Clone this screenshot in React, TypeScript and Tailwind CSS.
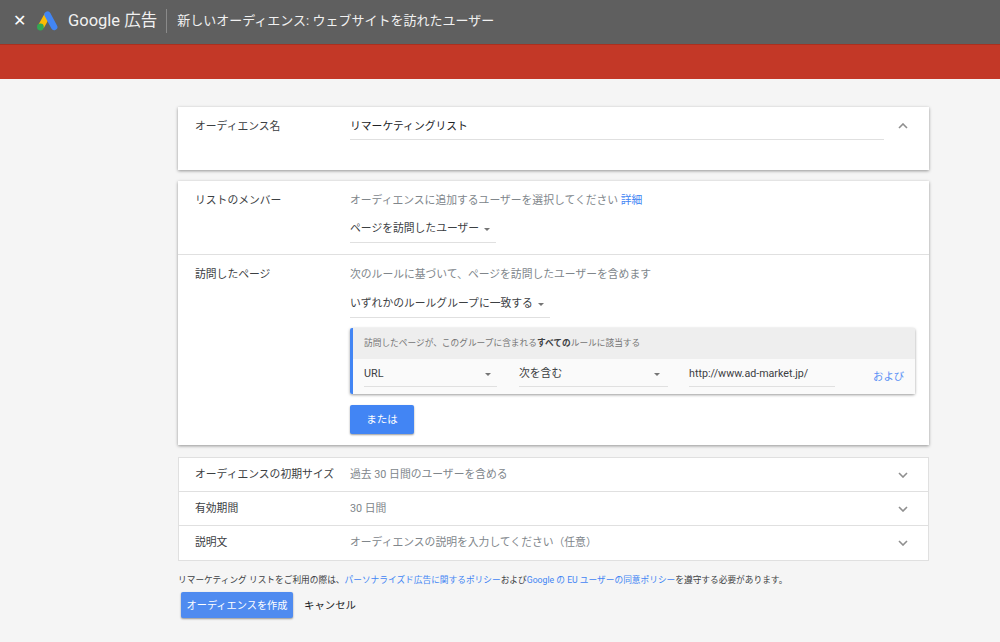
const font = "font-['Roboto','Noto_Sans_CJK_JP',sans-serif]"

function Caret() {
  return <span className="ml-[5px] inline-block h-0 w-0 border-x-[3.5px] border-t-[3.5px] border-x-transparent border-t-[#757575]" />
}

function Chevron({ up }: { up?: boolean }) {
  return (
    <svg width="10" height="6" viewBox="0 0 10 6" fill="none" stroke="#8f8f8f" strokeWidth="1.6" className={up ? "rotate-180" : ""}>
      <path d="M1 1l4 4 4-4" />
    </svg>
  )
}

function AdsLogo() {
  return (
    <svg width="22" height="20" viewBox="0 0 22 20" fill="none" strokeLinecap="round" strokeWidth="6.4">
      <path d="M11.5 4 5 15.5" stroke="#fbbc04" strokeLinecap="butt" />
      <path d="M11.5 3.6 18.2 16" stroke="#4285f4" />
      <circle cx="4.4" cy="16" r="3.4" fill="#34a853" />
    </svg>
  )
}

function SummaryRow({ label, value }: { label: string; value: string }) {
  return (
    <div className="flex h-[34px] items-center border-b border-[#e0e0e0] pl-[16px] pr-[20px] last:border-b-0">
      <div className="w-[155px] whitespace-nowrap text-[10.8px] text-[#3c4043]">{label}</div>
      <div className="flex-1 text-[10.8px] text-[#80868b]">{value}</div>
      <Chevron />
    </div>
  )
}

export default function App() {
  return (
    <div className={`${font} min-h-[642px] w-[1000px] bg-[#f5f5f5]`}>
      <header className="flex h-[44px] items-center bg-[#5f5f5f] pb-[2px] text-white">
        <span className="ml-[13px] text-[16px] leading-none">✕</span>
        <div className="ml-[10px]"><AdsLogo /></div>
        <div className="ml-[10px] text-[16.5px] text-[#f1f1f1]">Google 広告</div>
        <div className="ml-[9px] h-[24px] w-px bg-[#8a8a8a]" />
        <div className="ml-[10px] text-[13px] text-[#f1f1f1]">新しいオーディエンス: ウェブサイトを訪れたユーザー</div>
      </header>
      <div className="h-[35px] border-t border-[#a9301f] bg-[#c33827]" />

      <main className="ml-[178px] w-[751px] pt-[28px]">
        <section className="flex h-[63px] bg-white pl-[17px] pr-[20px] pt-[12px] shadow-[0_1px_3px_rgba(0,0,0,0.4)]">
          <div className="w-[155px] text-[10.8px] text-[#3c4043]">オーディエンス名</div>
          <div className="h-[21px] w-[534px] border-b border-[#e0e0e0] text-[10.8px] text-[#202124]">リマーケティングリスト</div>
          <div className="ml-[14px] mt-[4px]"><Chevron up /></div>
        </section>

        <section className="mt-[11px] bg-white shadow-[0_1px_3px_rgba(0,0,0,0.4)]">
          <div className="flex h-[74px] border-b border-[#e0e0e0] pl-[17px] pt-[12px]">
            <div className="w-[155px] text-[10.8px] text-[#3c4043]">リストのメンバー</div>
            <div>
              <div className="text-[10.8px] text-[#80868b]">オーディエンスに追加するユーザーを選択してください <span className="text-[#4285f4]">詳細</span></div>
              <div className="mt-[10px] flex h-[24px] w-[146px] items-center whitespace-nowrap border-b border-[#e0e0e0] pb-[3px] text-[10.8px] text-[#3c4043]">ページを訪問したユーザー<Caret /></div>
            </div>
          </div>
          <div className="flex pb-[11px] pl-[17px] pr-[14px] pt-[12px]">
            <div className="w-[155px] text-[10.8px] text-[#3c4043]">訪問したページ</div>
            <div className="flex-1">
              <div className="text-[10.8px] text-[#80868b]">次のルールに基づいて、ページを訪問したユーザーを含めます</div>
              <div className="mt-[11px] flex h-[24px] w-[200px] items-center whitespace-nowrap border-b border-[#e0e0e0] pb-[3px] text-[10.8px] text-[#3c4043]">いずれかのルールグループに一致する<Caret /></div>
              <div className="mt-[10px] rounded-[2px] border-l-[3px] border-[#4285f4] shadow-[0_1px_3px_rgba(0,0,0,0.4)]">
                <div className="flex h-[31px] items-center bg-[#eeeeee] pl-[11px] text-[8.7px] text-[#757575]">
                  <span>訪問したページが、このグループに含まれる<b className="text-[#3c4043]">すべての</b>ルールに該当する</span>
                </div>
                <div className="flex h-[35px] bg-[#fafafa] pl-[11px] text-[10.8px] text-[#3c4043]">
                  <div className="mt-[3px] flex h-[25px] w-[133px] items-center justify-between border-b border-[#e0e0e0] pr-[6px]">URL<Caret /></div>
                  <div className="ml-[22px] mt-[3px] flex h-[25px] w-[149px] items-center justify-between border-b border-[#e0e0e0] pr-[8px]">次を含む<Caret /></div>
                  <div className="ml-[21px] mt-[3px] flex h-[25px] w-[146px] items-center border-b border-[#e0e0e0] text-[10.7px]">http://www.ad-market.jp/</div>
                  <div className="ml-[38px] mt-[10px] text-[10.4px] text-[#5b91f5]">および</div>
                </div>
              </div>
              <button className="mt-[11px] block h-[29px] w-[64px] rounded-[2px] bg-[#4285f4] text-[10.5px] text-white shadow-[0_1px_2px_rgba(0,0,0,0.4)]">または</button>
            </div>
          </div>
        </section>

        <section className="mt-[12px] border border-[#e0e0e0] bg-white">
          <SummaryRow label="オーディエンスの初期サイズ" value="過去 30 日間のユーザーを含める" />
          <SummaryRow label="有効期間" value="30 日間" />
          <SummaryRow label="説明文" value="オーディエンスの説明を入力してください（任意）" />
        </section>

        <p className="mt-[12px] text-[8.7px] leading-[14px] text-[#3c4043]">
          リマーケティング リストをご利用の際は、<span className="text-[#4285f4]">パーソナライズド広告に関するポリシー</span>および<span className="text-[#4285f4]">Google の EU ユーザーの同意ポリシー</span>を遵守する必要があります。
        </p>
        <div className="mt-[5px] flex items-center">
          <button className="ml-[3px] h-[26px] w-[112px] rounded-[2px] bg-[#4f8bf0] text-[10.2px] text-white shadow-[0_1px_2px_rgba(0,0,0,0.4)]">オーディエンスを作成</button>
          <span className="ml-[11px] pt-px text-[10.4px] text-[#202124]">キャンセル</span>
        </div>
      </main>
    </div>
  )
}
